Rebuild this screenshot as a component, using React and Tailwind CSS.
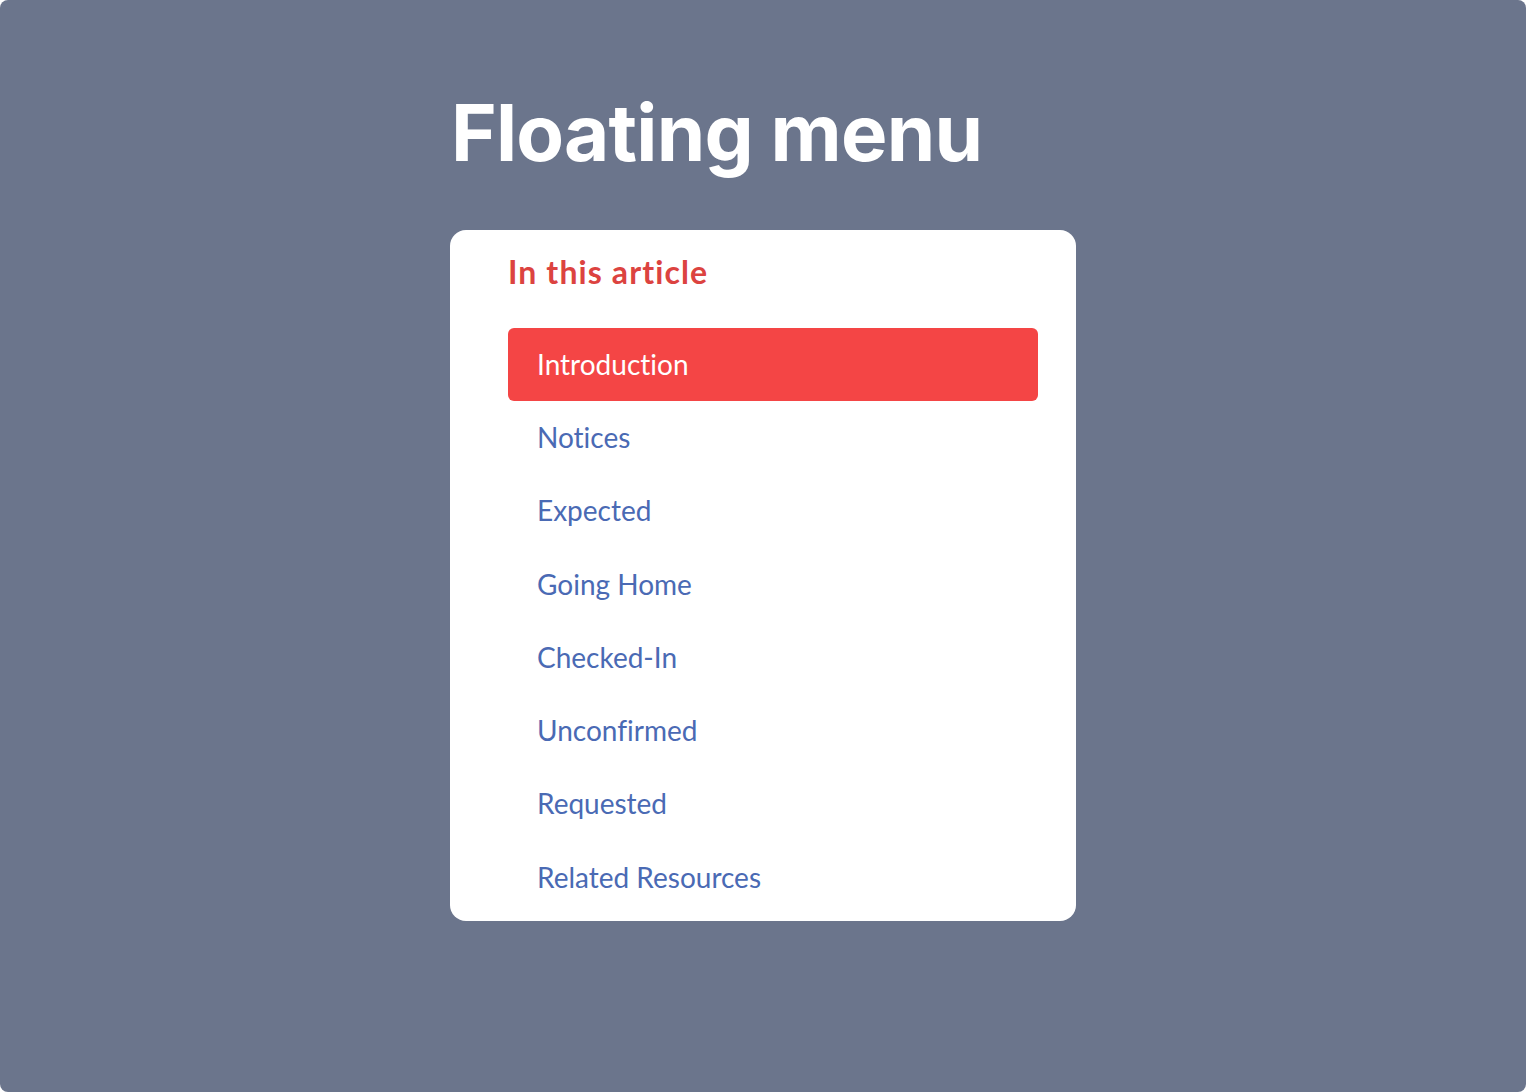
import React from "react";

const items = [
  "Introduction",
  "Notices",
  "Expected",
  "Going Home",
  "Checked-In",
  "Unconfirmed",
  "Requested",
  "Related Resources",
];

const MenuItem = ({ label, active }) => (
  <div
    className={`h-[73.3px] flex items-center pl-[29px] pb-[2px] rounded-md text-[28px] ${
      active ? "bg-[#f44545] text-white" : "text-[#4a6ab4]"
    }`}
  >
    {label}
  </div>
);

export default function App() {
  return (
    <div className="w-[1526px] h-[1092px] bg-white">
      <div className="w-full h-full bg-[#6b758c] rounded-lg flex flex-col items-center">
        <div className="w-[626px] pt-[85px]">
          <h1 className="text-white font-bold text-[78px] leading-[96px] tracking-[-0.8px] font-['Inter',sans-serif] ml-[1px]">
            Floating menu
          </h1>
          <div className="mt-[49px] bg-white rounded-2xl pl-[58px] pr-[38px] pt-[17px] h-[691px] font-['Lato',sans-serif] [font-variant-ligatures:none]">
            <h2 className="text-[#dc4340] font-bold text-[32px] leading-[50px] tracking-[1.1px]">In this article</h2>
            <nav className="mt-[31px]">
              {items.map((label, i) => (
                <MenuItem key={label} label={label} active={i === 0} />
              ))}
            </nav>
          </div>
        </div>
      </div>
    </div>
  );
}
